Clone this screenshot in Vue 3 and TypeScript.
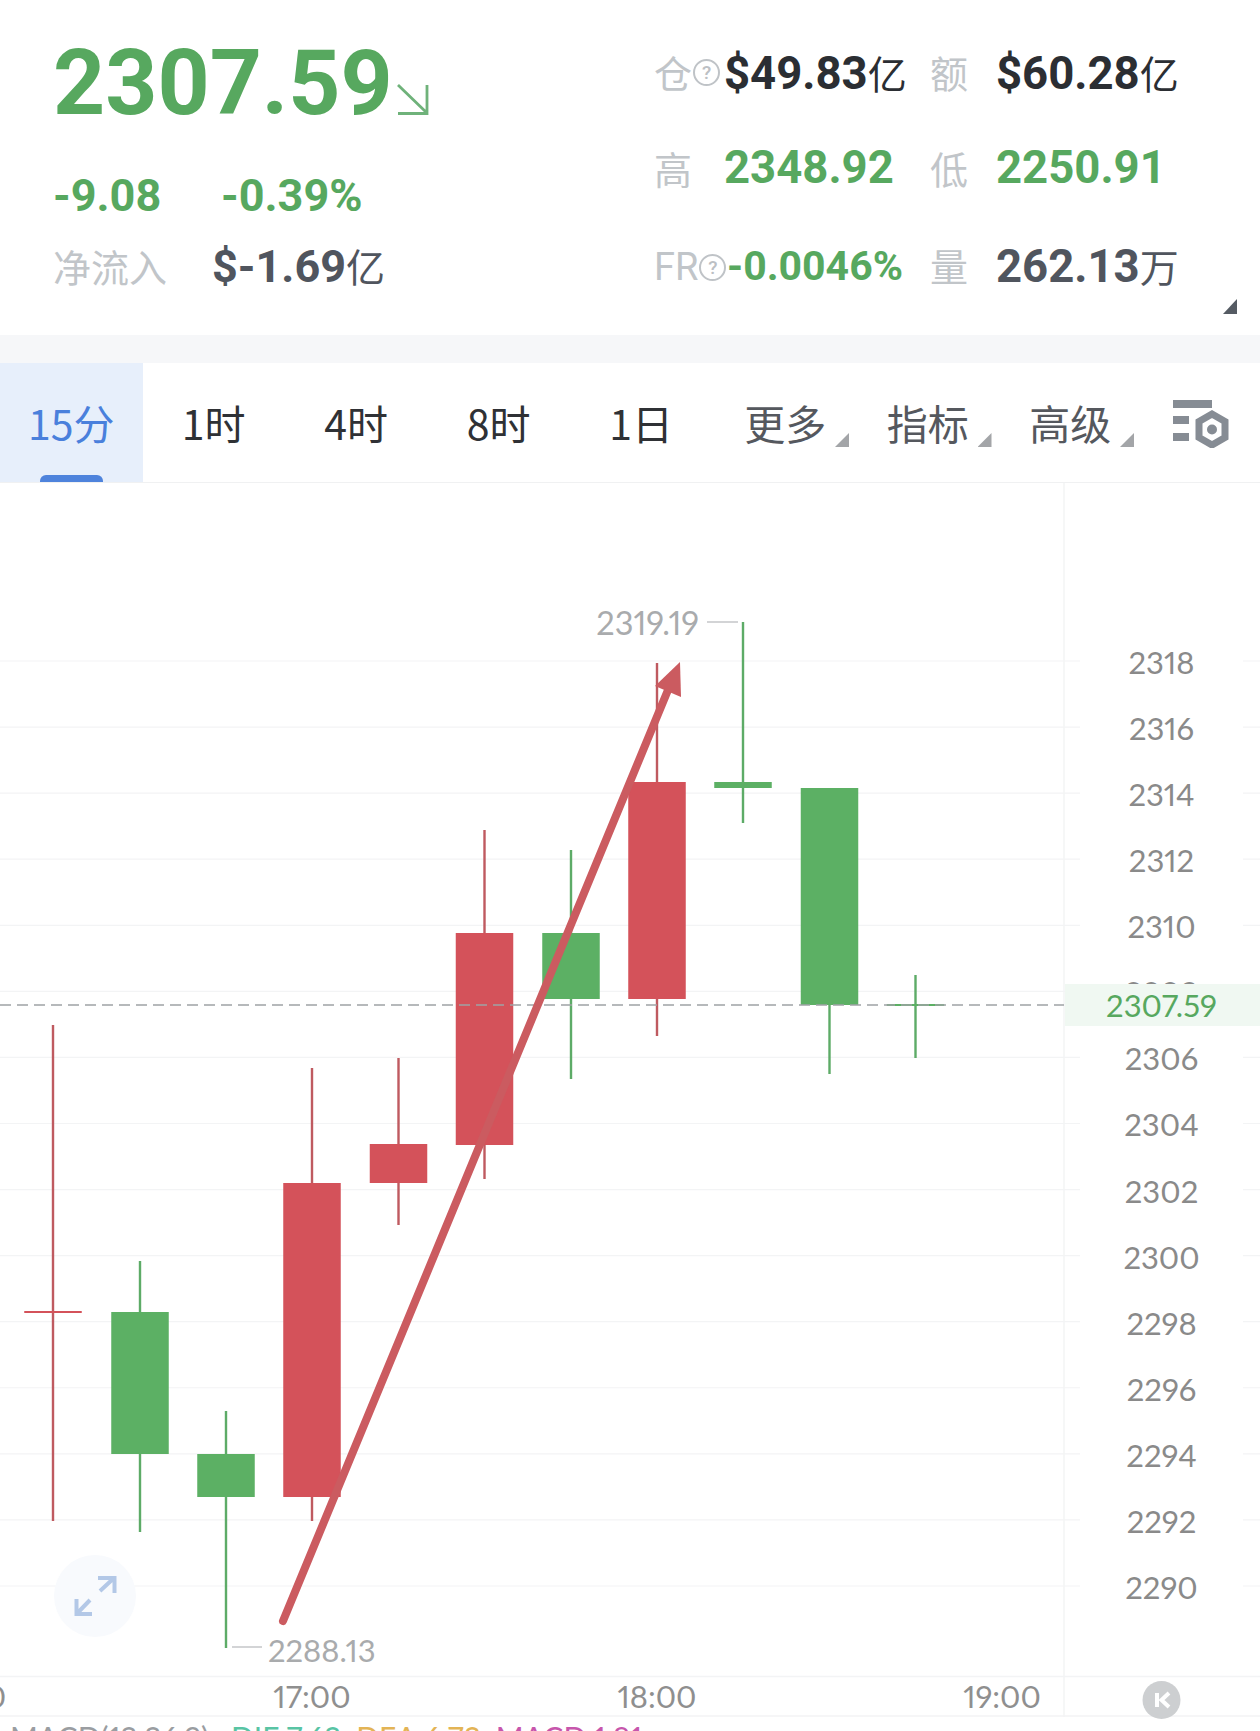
<script setup lang="ts">
interface Candle {
  x: number
  wickTop: number
  wickBottom: number
  bodyTop: number
  bodyBottom: number
  color: 'up' | 'down'
}

const timeTabs = ['15分', '1时', '4时', '8时', '1日']
const menuTabs = ['更多', '指标', '高级']

const candles: Candle[] = [
  { x: 53, wickTop: 1025, wickBottom: 1521, bodyTop: 1311, bodyBottom: 1313, color: 'up' },
  { x: 140, wickTop: 1261, wickBottom: 1532, bodyTop: 1312, bodyBottom: 1454, color: 'down' },
  { x: 226, wickTop: 1411, wickBottom: 1648, bodyTop: 1454, bodyBottom: 1497, color: 'down' },
  { x: 312, wickTop: 1068, wickBottom: 1521, bodyTop: 1183, bodyBottom: 1497, color: 'up' },
  { x: 398.5, wickTop: 1058, wickBottom: 1225, bodyTop: 1144, bodyBottom: 1183, color: 'up' },
  { x: 484.5, wickTop: 830, wickBottom: 1179, bodyTop: 933, bodyBottom: 1145, color: 'up' },
  { x: 571, wickTop: 850, wickBottom: 1079, bodyTop: 933, bodyBottom: 999, color: 'down' },
  { x: 657, wickTop: 663, wickBottom: 1036, bodyTop: 782, bodyBottom: 999, color: 'up' },
  { x: 743, wickTop: 622, wickBottom: 823, bodyTop: 782, bodyBottom: 788, color: 'down' },
  { x: 829.5, wickTop: 788, wickBottom: 1074, bodyTop: 788, bodyBottom: 1005, color: 'down' },
  { x: 915.5, wickTop: 975, wickBottom: 1058, bodyTop: 1004, bodyBottom: 1006, color: 'down' }
]

const CANDLE_WIDTH = 57.5

// 2318 down to 2290, one grid line every 2 points
const gridLines = Array.from({ length: 15 }, (_, i) => ({
  label: String(2318 - i * 2),
  y: 661 + i * 66.07
}))

const timeLabels = [
  { label: '16:00', x: -33 },
  { label: '17:00', x: 312 },
  { label: '18:00', x: 657 },
  { label: '19:00', x: 1002 }
]
</script>

<template>
  <div class="page">
    <section class="summary">
      <div class="summary-left">
        <div class="price-row">
          <span class="price">2307.59</span>
          <svg class="trend" width="32" height="31" viewBox="0 0 32 31" fill="none">
            <path d="M1 1 L30 29 M30 1 V29.5 H1" stroke="#6fb27a" stroke-width="2.8" />
          </svg>
        </div>
        <div class="change-row">
          <span class="num green change-abs">-9.08</span>
          <span class="num green">-0.39%</span>
        </div>
        <div class="net-row">
          <span class="label net-label">净流入</span>
          <span class="num slate">$-1.69<span class="unit">亿</span></span>
        </div>
      </div>

      <div class="stats">
        <div class="stat-label"><span class="label">仓</span><span class="help">?</span></div>
        <div class="num dark">$49.83<span class="unit">亿</span></div>
        <div class="stat-label"><span class="label">额</span></div>
        <div class="num dark">$60.28<span class="unit">亿</span></div>

        <div class="stat-label"><span class="label">高</span></div>
        <div class="num green">2348.92</div>
        <div class="stat-label"><span class="label">低</span></div>
        <div class="num green">2250.91</div>

        <div class="stat-label fr-row"><span class="label fr">FR</span><span class="help">?</span></div>
        <div class="num green fr-value">-0.0046%</div>
        <div class="stat-label"><span class="label">量</span></div>
        <div class="num slate">262.13<span class="unit">万</span></div>
      </div>

      <i class="corner"></i>
    </section>

    <div class="band"></div>

    <nav class="tabs">
      <div
        v-for="(tab, i) in timeTabs"
        :key="tab"
        class="tab"
        :class="{ active: i === 0 }"
      >
        {{ tab }}
      </div>
      <div v-for="tab in menuTabs" :key="tab" class="tab menu">{{ tab }}</div>
      <svg class="settings" width="56" height="48" viewBox="0 0 56 48">
        <rect x="0" y="0" width="39" height="8" fill="#868c94" />
        <rect x="0" y="16" width="16" height="8" fill="#868c94" />
        <rect x="0" y="33" width="16" height="8" fill="#868c94" />
        <path
          d="M39 14 L52 21.5 V37.5 L39 45 L26 37.5 V21.5 Z"
          fill="none"
          stroke="#868c94"
          stroke-width="7"
        />
        <circle cx="39" cy="29.5" r="5" fill="#868c94" />
      </svg>
    </nav>

    <svg class="chart" width="1260" height="1234" viewBox="0 483 1260 1234">
      <g v-for="line in gridLines" :key="line.label">
        <path :d="`M0 ${line.y} H1080 M1243 ${line.y} H1260`" stroke="#f3f4f5" stroke-width="1.2" />
        <text class="axis-label" x="1161.5" :y="line.y + 13" text-anchor="middle">{{ line.label }}</text>
      </g>
      <text class="axis-label" x="1161.5" y="1005" text-anchor="middle">2308</text>

      <path d="M1064 483 V1717" stroke="#f3f4f5" stroke-width="1.5" />

      <g v-for="c in candles" :key="c.x">
        <rect
          :x="c.x - 1.2"
          :y="c.wickTop"
          width="2.4"
          :height="c.wickBottom - c.wickTop"
          :class="c.color === 'up' ? 'wick-up' : 'wick-down'"
        />
        <rect
          :x="c.x - CANDLE_WIDTH / 2"
          :y="c.bodyTop"
          :width="CANDLE_WIDTH"
          :height="c.bodyBottom - c.bodyTop"
          :class="c.color === 'up' ? 'body-up' : 'body-down'"
        />
      </g>

      <path d="M0 1005 H1064" stroke="#9fa2a5" stroke-width="1.5" stroke-dasharray="11 6" />
      <rect x="1065" y="984" width="195" height="42" fill="#f0f8f2" />
      <text class="axis-label tag-label" x="1161.5" y="1017" text-anchor="middle">2307.59</text>

      <text class="extreme wide" x="699" y="635" text-anchor="end">2319.19</text>
      <path d="M707 622 H738" stroke="#c4c6c8" stroke-width="1.5" />
      <text class="extreme" x="268" y="1662">2288.13</text>
      <path d="M232 1647 H262" stroke="#c4c6c8" stroke-width="1.5" />

      <!-- hand drawn arrow over the candles -->
      <path d="M283 1621 L668 690" stroke="#cb5b60" stroke-width="8" stroke-linecap="round" />
      <path d="M680 662 L655 686 L681 697 Z" fill="#cb5b60" />

      <circle cx="95" cy="1596" r="41" fill="#f8fafd" />
      <path
        d="M98 1578 H114.5 V1593 M114 1578 L100 1591 M76.5 1599 V1614 H92 M77 1613.5 L90 1600"
        fill="none"
        stroke="#b3c8e7"
        stroke-width="4"
      />

      <path d="M0 1676.5 H1260 M0 1716 H1260" stroke="#f3f4f5" stroke-width="1.5" />
      <text
        v-for="t in timeLabels"
        :key="t.label"
        class="time-label"
        :x="t.x"
        y="1708"
        text-anchor="middle"
      >
        {{ t.label }}
      </text>

      <circle cx="1161.5" cy="1700" r="19" fill="#cdcfd1" />
      <path d="M1157 1693 V1707 M1169 1693 L1161.5 1700 L1169 1707" fill="none" stroke="#fff" stroke-width="4" />
    </svg>

    <div class="macd">
      <span class="macd-name">MACD(12,26,9)</span>
      <span class="macd-dif">DIF:7.62</span>
      <span class="macd-dea">DEA:6.72</span>
      <span class="macd-val">MACD:1.81</span>
    </div>
  </div>
</template>

<style scoped>
.page {
  position: relative;
  width: 1260px;
  height: 1731px;
  overflow: hidden;
  background: #fff;
  font-family: Roboto, "Noto Sans CJK SC", sans-serif;
}

.summary {
  position: relative;
  display: flex;
  height: 335px;
}

.summary-left {
  width: 654px;
  padding-left: 53px;
  box-sizing: border-box;
}

.price-row {
  display: flex;
  align-items: flex-start;
  margin-top: 38px;
  height: 91px;
}

.price {
  font-size: 91px;
  line-height: 91px;
  font-weight: 700;
  color: #57a85f;
}

.trend {
  margin: 46px 0 0 4px;
}

.num {
  font-size: 45.5px;
  line-height: 46px;
  font-weight: 700;
  white-space: nowrap;
}

.green {
  color: #57a85f;
}

.dark {
  color: #2b2e33;
}

.slate {
  color: #50555e;
}

.unit {
  font-family: "Noto Sans CJK SC", sans-serif;
  font-size: 39px;
  font-weight: 400;
}

.change-row {
  display: flex;
  margin-top: 44px;
}

.change-row .num {
  font-size: 45px;
}

.change-abs {
  width: 168px;
}

.net-row {
  display: flex;
  align-items: baseline;
  margin-top: 23px;
}

.net-row .num {
  font-size: 45px;
}

.label {
  font-family: "Noto Sans CJK SC", sans-serif;
  font-size: 38px;
  line-height: 46px;
  color: #c1c5c9;
}

.net-label {
  width: 159px;
}

.stats {
  display: grid;
  grid-template-columns: 70px 206px 66px 1fr;
  grid-template-rows: 96px 97px 46px;
  padding-top: 49px;
}

.stat-label {
  display: flex;
  align-items: flex-start;
  white-space: nowrap;
}

.fr-row {
  margin-top: 2px;
}

.fr {
  font-family: Roboto, sans-serif;
  width: 46px;
}

.help {
  display: flex;
  align-items: center;
  justify-content: center;
  flex: none;
  width: 27px;
  height: 27px;
  margin: 10px 0 0 1px;
  box-sizing: border-box;
  border: 2px solid #bfc3c7;
  border-radius: 50%;
  font-size: 19px;
  font-weight: 500;
  color: #bcc0c4;
}

.fr-value {
  font-size: 41px;
  margin: 1px 0 0 3px;
}

.corner {
  position: absolute;
  left: 1223px;
  top: 299px;
  width: 14px;
  height: 15px;
  background: #555b63;
  clip-path: polygon(100% 0, 100% 100%, 0 100%);
}

.band {
  height: 28px;
  background: #f6f7f9;
}

.tabs {
  display: flex;
  height: 120px;
  box-sizing: border-box;
  border-bottom: 1.5px solid #f0f1f2;
  font-family: "Noto Sans CJK SC", sans-serif;
}

.tab {
  position: relative;
  display: flex;
  align-items: center;
  justify-content: center;
  flex: none;
  width: 142.5px;
  padding-bottom: 2px;
  box-sizing: border-box;
  font-size: 41px;
  color: #2f3135;
}

.tab.active {
  background: #e7effb;
  color: #4a80dc;
}

.tab.active::after {
  content: "";
  position: absolute;
  left: 40px;
  bottom: 0;
  width: 63px;
  height: 7px;
  border-radius: 6px 6px 0 0;
  background: #4e83dc;
}

.tab.menu {
  padding-left: 3px;
  color: #55585e;
}

.tab.menu::after {
  content: "";
  position: absolute;
  right: 6px;
  top: 70px;
  width: 14px;
  height: 14px;
  background: #a3a5a8;
  clip-path: polygon(100% 0, 100% 100%, 0 100%);
}

.settings {
  flex: none;
  margin: 37px 0 0 33px;
}

.chart {
  display: block;
  overflow: visible;
  font-variant-numeric: proportional-nums;
}

.wick-up {
  fill: #bf5a60;
}

.wick-down {
  fill: #5dab67;
}

.body-up {
  fill: #d4525a;
}

.body-down {
  fill: #5cb064;
}

.axis-label {
  font-family: Lato, sans-serif;
  font-size: 31px;
  fill: #8a8a8a;
}

.tag-label {
  fill: #57a85f;
}

.extreme {
  font-family: Lato, sans-serif;
  font-size: 31px;
  fill: #a9abad;
}

.extreme.wide {
  font-size: 32.5px;
}

.time-label {
  font-family: Lato, sans-serif;
  font-size: 31px;
  fill: #8f8f8f;
}

.macd {
  display: flex;
  gap: 15px;
  padding-left: 10px;
  font-family: Lato, sans-serif;
  font-size: 30px;
  line-height: 40px;
  font-variant-numeric: proportional-nums;
  white-space: nowrap;
}

.macd-name {
  margin-right: 7px;
  color: #9a9da1;
}

.macd-dif {
  color: #58c4a4;
}

.macd-dea {
  color: #e3b455;
}

.macd-val {
  color: #c756ac;
}
</style>

<style>
html,
body {
  margin: 0;
  background: #fff;
}
</style>
